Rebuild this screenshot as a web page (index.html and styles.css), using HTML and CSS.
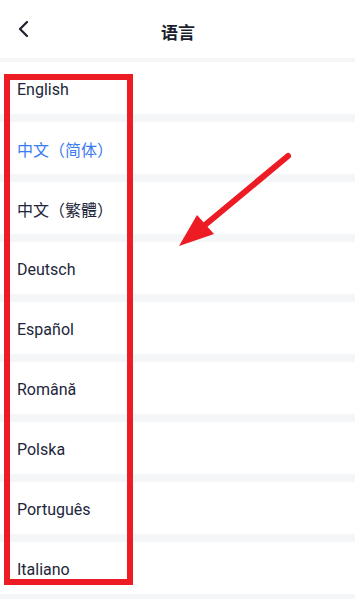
FILE: index.html
```html
<!DOCTYPE html>
<html lang="zh">
<head>
<meta charset="utf-8">
<link rel="stylesheet" href="styles.css">
</head>
<body>
<div class="page">
  <header class="header">
    <span class="back">
      <svg width="14" height="18" viewBox="0 0 14 18"><path d="M10 2 L3 9 L10 16" fill="none" stroke="#1c1f2e" stroke-width="2.2" stroke-linecap="round" stroke-linejoin="round"/></svg>
    </span>
    <h1 class="title">语言</h1>
  </header>
  <div class="sep thin"></div>
  <ul class="list">
    <li class="row">English</li>
    <li class="sep"></li>
    <li class="row active">中文（简体）</li>
    <li class="sep"></li>
    <li class="row">中文（繁體）</li>
    <li class="sep"></li>
    <li class="row">Deutsch</li>
    <li class="sep"></li>
    <li class="row">Español</li>
    <li class="sep"></li>
    <li class="row">Română</li>
    <li class="sep"></li>
    <li class="row">Polska</li>
    <li class="sep"></li>
    <li class="row">Português</li>
    <li class="sep"></li>
    <li class="row">Italiano</li>
    <li class="sep"></li>
  </ul>
  <div class="highlight"></div>
  <svg class="pointer" width="363" height="599" viewBox="0 0 363 599">
    <line x1="288" y1="156" x2="205" y2="225" stroke="#ed1c24" stroke-width="6" stroke-linecap="round"/>
    <polygon points="179,246 197,215 214,234" fill="#ed1c24"/>
  </svg>
</div>
</body>
</html>
```
FILE: styles.css
```css
* { box-sizing: border-box; }
html, body { margin: 0; padding: 0; background: #fff; }
body {
  font-family: Roboto, "Noto Sans", "Noto Sans CJK SC", sans-serif;
  color: #22263a;
  width: 363px;
  height: 599px;
  overflow: hidden;
}
.page { position: relative; width: 363px; height: 599px; }
.header {
  height: 58px;
  display: flex;
  align-items: center;
  position: relative;
  padding-left: 17px;
}
.back { display: flex; align-items: center; }
.title {
  position: absolute;
  left: 0; right: 7px; top: 0; bottom: 0;
  margin: 0;
  display: flex;
  align-items: center;
  justify-content: center;
  font-size: 17px;
  font-weight: 700;
  font-family: "Noto Sans CJK SC", sans-serif;
  color: #1c1f2e;
  padding-top: 4px;
}
.list { list-style: none; margin: 0; padding: 0; }
.sep { height: 8px; background: #f5f6f8; margin-right: 8px; }
.sep.thin { height: 4px; }
.row {
  height: 52px;
  display: flex;
  align-items: center;
  padding-left: 17px;
  padding-top: 2px;
  font-size: 16px;
  font-family: Roboto, "Noto Sans CJK SC", sans-serif;
}
.row.active { color: #3a7cf2; }
.highlight {
  position: absolute;
  left: 4px; top: 74px;
  width: 129px; height: 511px;
  border: 6px solid #ed1c24;
}
.pointer { position: absolute; left: 0; top: 0; }
```
